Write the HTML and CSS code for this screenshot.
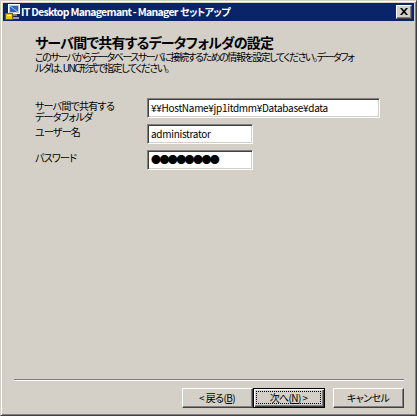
FILE: index.html
```
<!DOCTYPE html>
<html lang="ja">
<head>
<meta charset="utf-8">
<title>IT Desktop Managemant - Manager セットアップ</title>
<link rel="stylesheet" href="styles.css">
</head>
<body>
<div class="window">
  <div class="titlebar">
    <svg class="app-icon" width="16" height="16" viewBox="0 0 16 16">
      <rect x="4.5" y="0.5" width="11" height="9" fill="#c8c8c8" stroke="#ffffff"/>
      <rect x="6" y="2" width="8" height="6" fill="#2f64b8"/>
      <path d="M6 2 L14 8" stroke="#9cc4f0" stroke-width="1"/>
      <rect x="8" y="10" width="5" height="2" fill="#808080"/>
      <rect x="1.5" y="9.5" width="7" height="6" fill="#f4c400" stroke="#7a5a00"/>
      <rect x="3" y="11" width="4" height="1" fill="#ffffff"/>
      <rect x="9" y="13" width="6" height="2" fill="#a0a0a0"/>
    </svg>
    <span class="title"><span class="latin">IT Desktop Managemant - Manager</span> <span class="kana">セットアップ</span></span>
    <div class="close-btn">
      <svg width="8" height="7" viewBox="0 0 8 7">
        <path d="M0 0 H2 L4 2.3 L6 0 H8 L5.1 3.5 L8 7 H6 L4 4.7 L2 7 H0 L2.9 3.5 Z" fill="#000"/>
      </svg>
    </div>
  </div>
  <div class="body">
    <div class="header">
      <h1 class="heading">サーバ間で共有するデータフォルダの設定</h1>
      <p class="desc">このサーバからデータベースサーバに接続するための情報を設定してください。データフォ<br>ルダは、UNC形式で指定してください。</p>
    </div>
    <div class="form">
      <div class="label">サーバ間で共有する<br>データフォルダ</div>
      <div class="field wide"><span class="value">¥¥HostName¥jp1itdmm¥Database¥data</span></div>
      <div class="label">ユーザー名</div>
      <div class="field"><span class="value">administrator</span></div>
      <div class="label">パスワード</div>
      <div class="field"><span class="dots">●●●●●●●●</span></div>
    </div>
    <div class="footer">
      <div class="separator"></div>
      <div class="buttons">
        <div class="btn back"><span class="btn-label">&lt; 戻る(<u>B</u>)</span></div>
        <div class="btn next default"><span class="btn-label focus">次へ(<u>N</u>) &gt;</span></div>
        <div class="btn cancel"><span class="btn-label">キャンセル</span></div>
      </div>
    </div>
  </div>
</div>
</body>
</html>
```

FILE: styles.css
```
html, body {
  margin: 0;
  padding: 0;
  background: #ffffff;
}

body {
  font-family: "Noto Sans CJK JP", sans-serif;
  color: #000;
}

.window {
  box-sizing: border-box;
  width: 417px;
  height: 416px;
  background: #d4d0c8;
  border: 1px solid;
  border-color: #d4d0c8 #404040 #404040 #d4d0c8;
  box-shadow: inset 1px 1px #ffffff, inset -1px -1px #808080;
  padding: 2px;
  display: flex;
  flex-direction: column;
}

.titlebar {
  height: 18px;
  background: #0a246a;
  display: flex;
  align-items: center;
  padding-left: 1px;
  flex: none;
}

.app-icon {
  display: block;
  flex: none;
}

.title {
  color: #ffffff;
  font-weight: bold;
  font-size: 10.5px;
  line-height: 18px;
  white-space: nowrap;
  margin-left: 1px;
}

.title .latin {
  letter-spacing: -0.7px;
}

.title .kana {
  font-size: 10px;
  font-feature-settings: "palt";
  letter-spacing: -0.6px;
}

.close-btn {
  margin-left: auto;
  margin-right: 2px;
  box-sizing: border-box;
  width: 16px;
  height: 14px;
  background: #d4d0c8;
  border: 1px solid;
  border-color: #ffffff #404040 #404040 #ffffff;
  box-shadow: inset -1px -1px #808080;
  display: flex;
  align-items: center;
  justify-content: center;
  padding: 0 1px 1px 0;
}

.close-btn svg {
  display: block;
}

.body {
  flex: 1;
  display: flex;
  flex-direction: column;
}

.header {
  padding-left: 32px;
}

.heading {
  margin: 13px 0 0 0;
  font-size: 14px;
  font-weight: bold;
  line-height: 17px;
  font-feature-settings: "palt";
  letter-spacing: -0.8px;
  white-space: nowrap;
}

.desc {
  margin: 0;
  font-size: 10px;
  line-height: 11px;
  font-feature-settings: "palt";
  letter-spacing: -1.45px;
  white-space: nowrap;
}

.form {
  margin: 25px 0 0 32px;
  display: grid;
  grid-template-columns: 112px auto;
  grid-auto-rows: 20px;
  row-gap: 6px;
  justify-items: start;
}

.label {
  font-size: 10px;
  line-height: 11px;
  padding-top: 2px;
  font-feature-settings: "palt";
  letter-spacing: -0.75px;
  white-space: nowrap;
}

.field {
  box-sizing: border-box;
  width: 106px;
  height: 20px;
  background: #ffffff;
  border: 1px solid;
  border-color: #808080 #ffffff #ffffff #808080;
  box-shadow: inset 1px 1px #404040, inset -1px -1px #d4d0c8;
  display: flex;
  align-items: center;
  padding: 0 2px 1px 3px;
  overflow: hidden;
}

.field.wide {
  width: 233px;
}

.value {
  font-size: 10px;
  letter-spacing: -0.3px;
  white-space: nowrap;
  line-height: 12px;
}

.dots {
  font-size: 10px;
  line-height: 12px;
  letter-spacing: -1.6px;
  white-space: nowrap;
}

.footer {
  margin-top: auto;
  padding-bottom: 5px;
}

.separator {
  height: 0;
  border-top: 1px solid #808080;
  border-bottom: 1px solid #ffffff;
  margin: 0 10px 0 11px;
}

.buttons {
  display: flex;
  justify-content: flex-end;
  margin-top: 7px;
  padding-right: 10px;
}

.btn {
  box-sizing: border-box;
  width: 71px;
  height: 20px;
  background: #d4d0c8;
  border: 1px solid;
  border-color: #ffffff #404040 #404040 #ffffff;
  box-shadow: inset -1px -1px #808080;
  display: flex;
  align-items: stretch;
  padding: 1px 2px 2px 1px;
}

.btn.default {
  width: 72px;
  border-color: #000000;
  box-shadow: inset 1px 1px #ffffff, inset -1px -1px #404040, inset -2px -2px #808080;
  padding: 2px 3px 3px 2px;
}

.btn.cancel {
  margin-left: 8px;
}

.btn-label {
  flex: 1;
  display: flex;
  align-items: center;
  justify-content: center;
  font-size: 10px;
  line-height: 12px;
  font-feature-settings: "palt";
  letter-spacing: -0.6px;
  white-space: nowrap;
  border: 1px solid transparent;
}

.btn-label.focus {
  border: 1px dotted #000000;
}

.btn-label u {
  text-underline-offset: 1px;
}
```
